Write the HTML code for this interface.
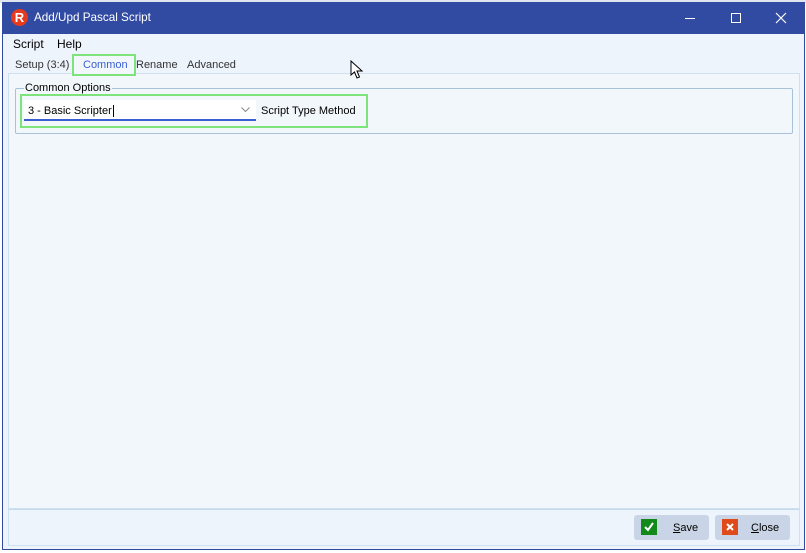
<!DOCTYPE html>
<html><head><style>
*{margin:0;padding:0;box-sizing:border-box}
body{width:806px;height:553px;background:#fff;font-family:"Liberation Sans",Arial,sans-serif;font-size:11px;color:#000;position:relative;overflow:hidden}
.a{position:absolute;white-space:nowrap}
</style></head><body>
<div class="a" style="left:0;top:0;width:806px;height:3px;background:#dfe6f0"></div>
<div class="a" style="left:2px;top:2px;width:803px;height:548px;background:#eef4fc;border:1px solid #2f4a9e;border-top:none"></div>
<div class="a" style="left:2px;top:2px;width:803px;height:32px;background:#314ba3"></div>
<div class="a" style="left:11px;top:9px;width:17px;height:17px;border-radius:50%;background:#e53a1e;color:#fff;font-weight:bold;font-size:13px;text-align:center;line-height:17px">R</div>
<div class="a" style="left:34px;top:11px;color:#fff;font-size:11.7px">Add/Upd Pascal Script</div>
<div class="a" style="left:685px;top:18px;width:10px;height:1px;background:#fff"></div>
<div class="a" style="left:731px;top:13px;width:10px;height:10px;border:1px solid #fff"></div>
<svg class="a" style="left:775px;top:12px" width="12" height="12"><path d="M1 1L11 11M11 1L1 11" stroke="#fff" stroke-width="1.2"/></svg>
<div class="a" style="left:13px;top:37px;font-size:12px">Script</div>
<div class="a" style="left:57px;top:37px;font-size:12px">Help</div>
<div class="a" style="left:8px;top:73px;width:792px;height:436px;background:#f2f7fc;border:1px solid #cfe0f0"></div>
<div class="a" style="left:15px;top:59px;color:#333">Setup (3:4)</div>
<div class="a" style="left:72px;top:54px;width:64px;height:22px;border:2px solid #7ee37a;background:#f2f7fc"></div>
<div class="a" style="left:83px;top:59px;color:#3a5fd0">Common</div>
<div class="a" style="left:136px;top:59px;color:#333">Rename</div>
<div class="a" style="left:187px;top:59px;color:#333">Advanced</div>
<div class="a" style="left:15px;top:88px;width:778px;height:46px;border:1px solid #a9c2da;border-radius:2px"></div>
<div class="a" style="left:24px;top:82px;background:#f2f7fc;padding:0 1px;color:#000">Common Options</div>
<div class="a" style="left:20px;top:94px;width:348px;height:34px;border:2px solid #7ee37a"></div>
<div class="a" style="left:24px;top:100px;width:232px;height:21px;background:#fff;border-bottom:2px solid #3a5fd0"></div>
<div class="a" style="left:28px;top:105px">3 - Basic Scripter<span style="border-left:1px solid #000;margin-left:1px"></span></div>
<svg class="a" style="left:241px;top:107px" width="9" height="6"><path d="M0.5 0.5L4.5 4.5L8.5 0.5" stroke="#888" fill="none"/></svg>
<div class="a" style="left:261px;top:105px">Script Type Method</div>
<svg class="a" style="left:350px;top:60px" width="14" height="20"><path d="M1 1L1 15L4.5 12L7 18L9.5 17L7 11L12 11Z" fill="#fff" stroke="#000"/></svg>
<div class="a" style="left:8px;top:509px;width:792px;height:37px;background:#eef4fc;border:1px solid #cfe0f0;border-top:1px solid #c8d9ec"></div>
<div class="a" style="left:634px;top:515px;width:75px;height:25px;background:#c9d5e6;border-radius:3px"></div>
<div class="a" style="left:641px;top:519px;width:16px;height:16px;background:#118a1a"></div>
<svg class="a" style="left:642px;top:520px" width="14" height="14"><path d="M3 7L6 10L11 3" stroke="#fff" stroke-width="2" fill="none"/></svg>
<div class="a" style="left:673px;top:522px"><u>S</u>ave</div>
<div class="a" style="left:715px;top:515px;width:75px;height:25px;background:#c9d5e6;border-radius:3px"></div>
<div class="a" style="left:722px;top:519px;width:16px;height:16px;background:#e04a1a"></div>
<svg class="a" style="left:725px;top:522px" width="10" height="10"><path d="M2 2L8 8M8 2L2 8" stroke="#fff" stroke-width="2"/></svg>
<div class="a" style="left:751px;top:522px"><u>C</u>lose</div>
</body></html>
